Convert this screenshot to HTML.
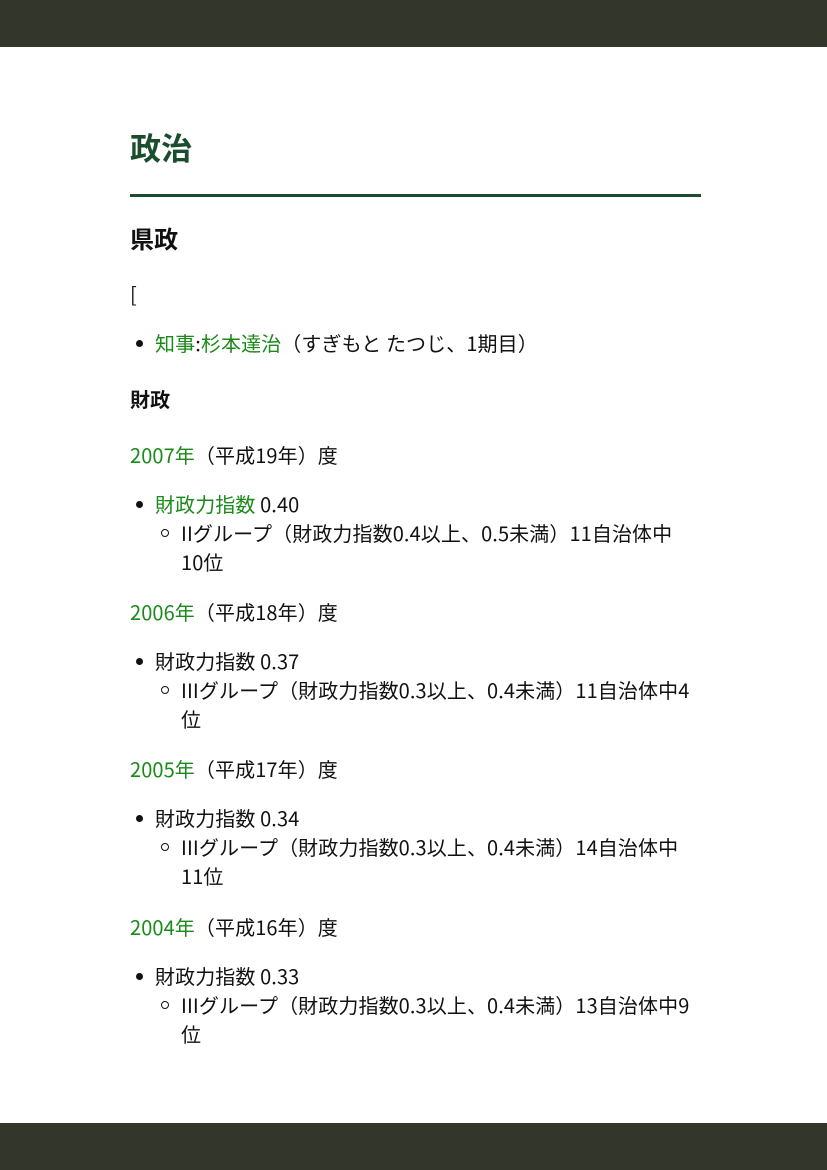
<!DOCTYPE html>
<html><head><meta charset="utf-8"><style>
body{margin:0;width:827px;height:1170px;position:relative;background:#fff;font-family:"Noto Sans CJK JP","Liberation Sans",sans-serif;color:#111;font-size:20px;overflow:hidden}
.bar{position:absolute;left:0;width:827px;height:47px;background:#33372b}
.l{position:absolute;line-height:30px;height:30px;white-space:nowrap;letter-spacing:0.1px}
.g{color:#1a8a1a}
.dot{position:absolute;left:136px;width:7px;height:7px;border-radius:50%;background:#111}
.cir{position:absolute;left:161px;width:6px;height:6px;border-radius:50%;border:1px solid #111}
</style></head><body>
<div class="bar" style="top:0"></div>
<div class="l" style="top:129px;left:130px;font-size:31px;font-weight:bold;color:#1a4d2e;line-height:36px;height:36px">政治</div>
<div style="position:absolute;top:194px;left:130px;width:571px;height:3px;background:#1a4d2e"></div>
<div class="l" style="top:223px;left:130px;font-size:24px;font-weight:bold">県政</div>
<div class="l" style="top:279px;left:130px">[</div>
<div class="dot" style="top:340px"></div><div class="l" style="top:328px;left:155px"><span class="g">知事</span>:<span class="g">杉本達治</span>（すぎもと たつじ、1期目）</div>
<div class="l" style="top:384px;left:130px;font-weight:bold">財政</div>

<div class="l" style="top:440px;left:130px"><span class="g">2007年</span>（平成19年）度</div>
<div class="dot" style="top:501px"></div><div class="l" style="top:489px;left:155px"><span class="g">財政力指数</span> 0.40</div>
<div class="cir" style="top:529px"></div><div class="l" style="top:518px;left:181px">IIグループ（財政力指数0.4以上、0.5未満）11自治体中</div>
<div class="l" style="top:547px;left:181px">10位</div>

<div class="l" style="top:597px;left:130px"><span class="g">2006年</span>（平成18年）度</div>
<div class="dot" style="top:658px"></div><div class="l" style="top:646px;left:155px">財政力指数 0.37</div>
<div class="cir" style="top:686px"></div><div class="l" style="top:675px;left:181px">IIIグループ（財政力指数0.3以上、0.4未満）11自治体中4</div>
<div class="l" style="top:704px;left:181px">位</div>

<div class="l" style="top:754px;left:130px"><span class="g">2005年</span>（平成17年）度</div>
<div class="dot" style="top:815px"></div><div class="l" style="top:803px;left:155px">財政力指数 0.34</div>
<div class="cir" style="top:843px"></div><div class="l" style="top:832px;left:181px">IIIグループ（財政力指数0.3以上、0.4未満）14自治体中</div>
<div class="l" style="top:861px;left:181px">11位</div>

<div class="l" style="top:912px;left:130px"><span class="g">2004年</span>（平成16年）度</div>
<div class="dot" style="top:973px"></div><div class="l" style="top:961px;left:155px">財政力指数 0.33</div>
<div class="cir" style="top:1001px"></div><div class="l" style="top:990px;left:181px">IIIグループ（財政力指数0.3以上、0.4未満）13自治体中9</div>
<div class="l" style="top:1019px;left:181px">位</div>

<div class="bar" style="top:1123px"></div>
</body></html>
